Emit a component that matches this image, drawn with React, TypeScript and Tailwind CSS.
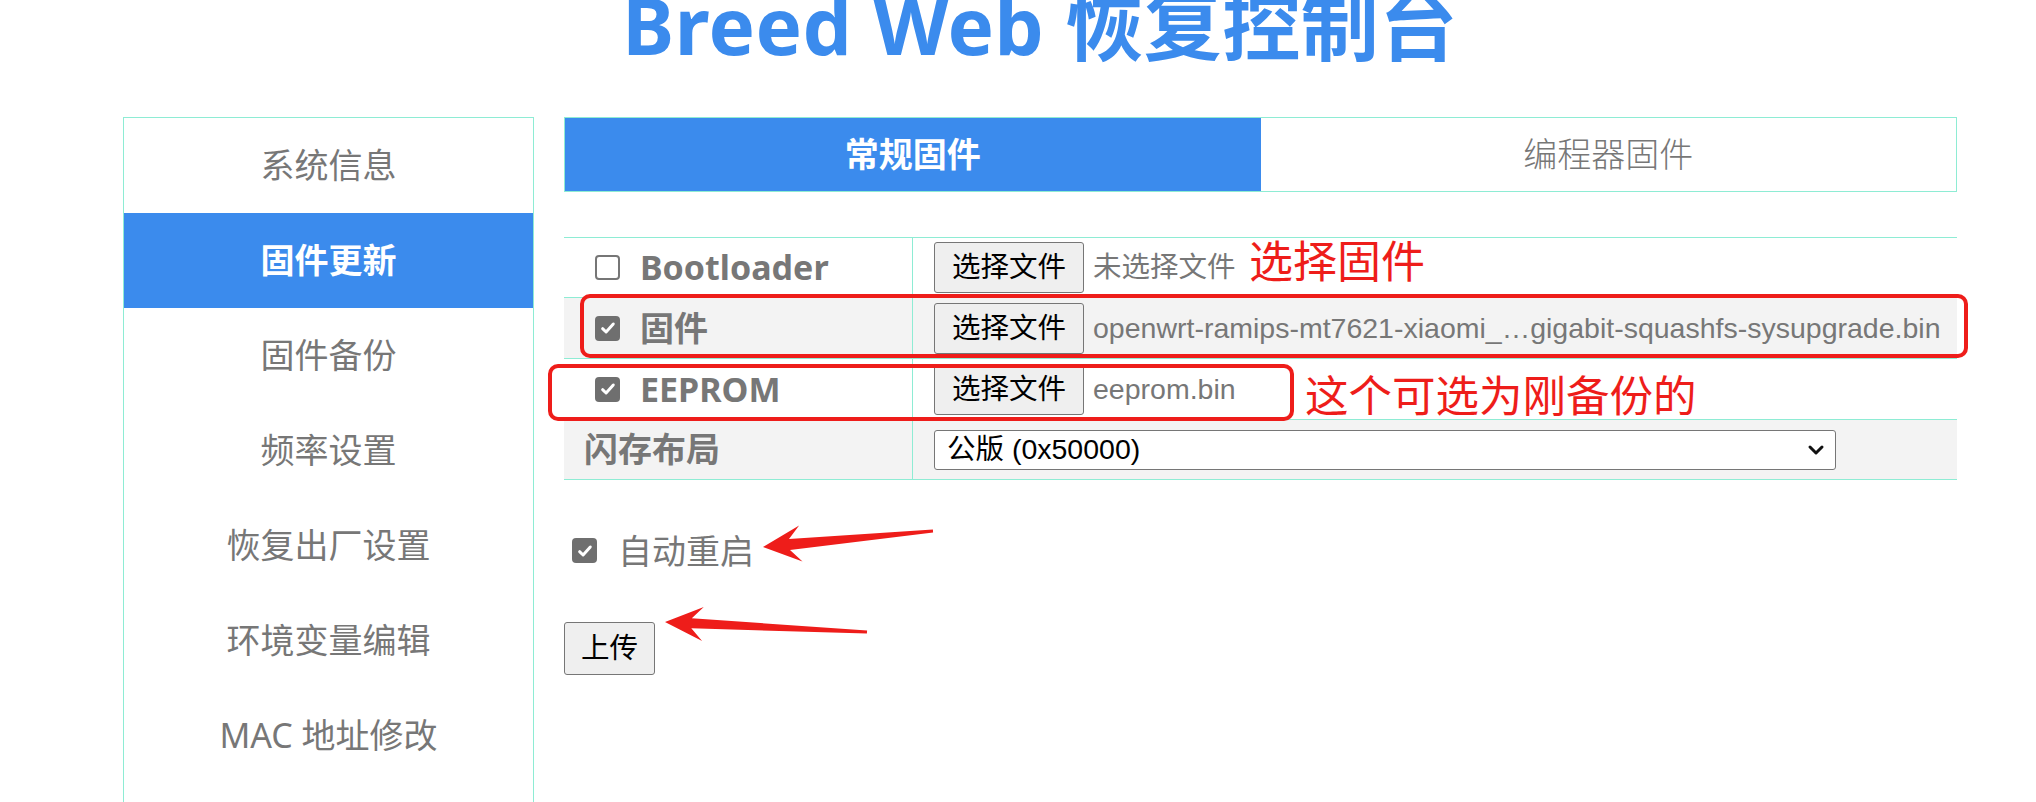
import React from "react";

const menu = ["系统信息", "固件更新", "固件备份", "频率设置", "恢复出厂设置", "环境变量编辑", "MAC 地址修改"];

const ui = "font-['Noto_Sans','Noto_Sans_CJK_SC',sans-serif]";
const arial = "font-['Liberation_Sans','Noto_Sans_CJK_SC',sans-serif]";

function Check({ on }: { on?: boolean }) {
  if (!on) return <span className="h-[25px] w-[25px] shrink-0 rounded-[4px] border-2 border-[#767676] bg-white" />;
  return (
    <span className="flex h-[25px] w-[25px] shrink-0 items-center justify-center rounded-[4px] bg-[#6f6f6f]">
      <svg viewBox="0 0 16 16" className="h-[18px] w-[18px]">
        <path d="M3.2 8.6l3.1 3 6.4-7.2" fill="none" stroke="#fff" strokeWidth="2.6" strokeLinecap="round" strokeLinejoin="round" />
      </svg>
    </span>
  );
}

function FilePick({ name }: { name: string }) {
  return (
    <div className={`flex items-center ${arial}`}>
      <span className="flex h-[51px] items-center rounded-[3px] border border-[#767676] bg-[#efefef] px-[17px] text-[28.5px] text-black">
        选择文件
      </span>
      <span className="ml-[9px] whitespace-nowrap text-[28.5px] text-[#777]">{name}</span>
    </div>
  );
}

// tapered hand-drawn arrow, tail -> tip
function arrow(tx: number, ty: number, hx: number, hy: number, head: number, headW: number, neckW: number, tailW: number) {
  const len = Math.hypot(hx - tx, hy - ty);
  const ux = (hx - tx) / len, uy = (hy - ty) / len;
  const nx = -uy, ny = ux;
  const nkx = hx - ux * head * 0.7, nky = hy - uy * head * 0.7;
  const bx = hx - ux * head, by = hy - uy * head;
  const p = [
    [tx + (nx * tailW) / 2, ty + (ny * tailW) / 2],
    [nkx + (nx * neckW) / 2, nky + (ny * neckW) / 2],
    [bx + (nx * headW) / 2, by + (ny * headW) / 2],
    [hx, hy],
    [bx - (nx * headW) / 2, by - (ny * headW) / 2],
    [nkx - (nx * neckW) / 2, nky - (ny * neckW) / 2],
    [tx - (nx * tailW) / 2, ty - (ny * tailW) / 2],
  ];
  return p.map(([x, y]) => `${x.toFixed(1)},${y.toFixed(1)}`).join(" ");
}

export default function App() {
  return (
    <div className={`relative h-[802px] w-[2036px] overflow-hidden bg-white ${ui}`}>
      {/* ── title ── */}
      <header className="flex h-[117px] justify-center pl-[123px] pr-[79px]">
        <h1 className="-mt-[14px] text-[78px] font-bold leading-[78px] tracking-[0.5px] text-[#3b8bed]">Breed Web 恢复控制台</h1>
      </header>

      <div className="flex gap-[30px] pl-[123px]">
        {/* ── side menu ── */}
        <aside className="flex h-[700px] w-[411px] shrink-0 flex-col border border-[#8eecd4]">
          {menu.map((m, i) => (
            <div
              key={m}
              className={`flex h-[95px] shrink-0 items-center justify-center text-[34px] ${
                i === 1 ? "bg-[#3b8bed] font-bold text-white" : "text-[#777]"
              }`}
            >
              {m}
            </div>
          ))}
        </aside>

        {/* ── main panel ── */}
        <main className="w-[1393px]">
          <div className="flex h-[75px] border border-[#8eecd4]">
            <div className="flex flex-1 items-center justify-center bg-[#3b8bed] text-[34px] font-bold text-white">常规固件</div>
            <div className="flex flex-1 items-center justify-center text-[34px] font-light text-[#777]">编程器固件</div>
          </div>

          <div className="mt-[45px] border-t border-[#8eecd4]">
            <div className="flex h-[60px] border-b border-[#8eecd4] bg-white">
              <div className="flex w-[349px] items-center border-r border-[#8eecd4] pl-[31px]">
                <Check />
                <span className="ml-[20px] text-[34px] font-bold text-[#777]">Bootloader</span>
              </div>
              <div className="flex flex-1 items-center pl-[21px]">
                <FilePick name="未选择文件" />
              </div>
            </div>
            <div className="flex h-[61px] border-b border-[#8eecd4] bg-[#f3f3f3]">
              <div className="flex w-[349px] items-center border-r border-[#8eecd4] pl-[31px]">
                <Check on />
                <span className="ml-[20px] text-[34px] font-bold text-[#777]">固件</span>
              </div>
              <div className="flex flex-1 items-center pl-[21px]">
                <FilePick name="openwrt-ramips-mt7621-xiaomi_…gigabit-squashfs-sysupgrade.bin" />
              </div>
            </div>
            <div className="flex h-[61px] border-b border-[#8eecd4] bg-white">
              <div className="flex w-[349px] items-center border-r border-[#8eecd4] pl-[31px]">
                <Check on />
                <span className="ml-[20px] text-[34px] font-bold text-[#777]">EEPROM</span>
              </div>
              <div className="flex flex-1 items-center pl-[21px]">
                <FilePick name="eeprom.bin" />
              </div>
            </div>
            <div className="flex h-[60px] border-b border-[#8eecd4] bg-[#f3f3f3]">
              <div className="flex w-[349px] items-center border-r border-[#8eecd4] pl-[20px]">
                <span className="text-[34px] font-bold text-[#777]">闪存布局</span>
              </div>
              <div className="flex flex-1 items-center pl-[21px]">
                <div className={`flex h-[40px] w-[902px] items-center justify-between rounded-[3px] border border-[#767676] bg-white pl-[12px] pr-[9px] text-[28.5px] text-black ${arial}`}>
                  <span>公版 (0x50000)</span>
                  <svg viewBox="0 0 20 20" className="h-[20px] w-[20px]">
                    <path d="M4 7l6 6 6-6" fill="none" stroke="#111" strokeWidth="3" strokeLinecap="round" strokeLinejoin="round" />
                  </svg>
                </div>
              </div>
            </div>
          </div>

          <div className="mt-[58px] flex h-[25px] items-center pl-[8px]">
            <Check on />
            <span className="ml-[21px] text-[34px] leading-none text-[#777]">自动重启</span>
          </div>

          <button className={`mt-[59px] h-[53px] w-[91px] rounded-[3px] border border-[#767676] bg-[#efefef] text-[28.5px] text-black ${arial}`}>
            上传
          </button>
        </main>
      </div>

      {/* ── red annotations drawn over the screenshot ── */}
      <div className="pointer-events-none absolute left-[580px] top-[294px] h-[64px] w-[1388px] rounded-[10px] border-[4px] border-[#ee1d1a]" />
      <div className="pointer-events-none absolute left-[548px] top-[364px] h-[57px] w-[746px] rounded-[10px] border-[4px] border-[#ee1d1a]" />
      <span className="absolute left-[1249px] top-[237px] text-[44px] leading-[44px] text-[#ee1d1a] font-['Noto_Sans_CJK_SC',sans-serif]">选择固件</span>
      <span className="absolute left-[1305px] top-[372px] text-[43.5px] leading-[44px] text-[#ee1d1a] font-['Noto_Sans_CJK_SC',sans-serif]">这个可选为刚备份的</span>
      <svg className="pointer-events-none absolute left-0 top-0" width="2036" height="802">
        <polygon points={arrow(933, 531, 763, 547, 38, 36, 11, 3)} fill="#ee1d1a" />
        <polygon points={arrow(867, 632, 665, 622, 38, 34, 10, 3)} fill="#ee1d1a" />
      </svg>
    </div>
  );
}
